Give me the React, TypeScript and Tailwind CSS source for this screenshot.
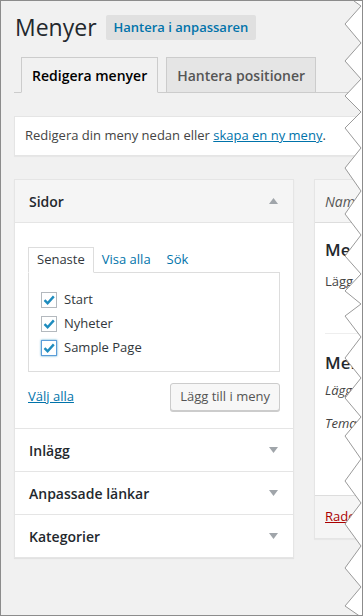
import React from 'react';

const leftPts = [23, 60, 95, 127, 167, 213, 255, 290, 315, 357, 397, 435, 480, 523, 567, 605];

// torn right edge of the screenshot
function TornEdge() {
  const pts: string[] = ['355,0'];
  let prev = 0;
  leftPts.forEach((y) => {
    const mid = Math.round((prev + y) / 2);
    pts.push(`362,${prev === 0 ? 5 : mid}`);
    pts.push(`346,${y}`);
    prev = y;
  });
  pts.push('362,616');
  const line = pts.join(' ');
  return (
    <svg className="absolute top-0 right-0 pointer-events-none" width="363" height="616" viewBox="0 0 363 616">
      <polygon points={`${line} 363,616 363,0`} fill="#ffffff" />
      <polyline points={line} fill="none" stroke="#9a9a9a" strokeWidth="1" />
    </svg>
  );
}

function Check({ focused }: { focused?: boolean }) {
  return (
    <span
      className={`w-4 h-4 bg-white border flex items-center justify-center ${
        focused ? 'border-[#5b9dd9] shadow-[0_0_2px_rgba(30,140,190,0.8)]' : 'border-[#b4b9be]'
      }`}
    >
      <svg width="14" height="14" viewBox="0 0 14 14">
        <path d="M2.5 7.2 L5.6 10.2 L11.8 3.4" fill="none" stroke="#1e8cbe" strokeWidth="2.4" />
      </svg>
    </span>
  );
}

function Arrow({ up }: { up?: boolean }) {
  return (
    <svg width="9" height="6" viewBox="0 0 9 6">
      <path d={up ? 'M0 6 L4.5 0 L9 6 Z' : 'M0 0 L4.5 6 L9 0 Z'} fill="#a0a5aa" />
    </svg>
  );
}

function Section({ title }: { title: string }) {
  return (
    <div className="h-[43px] border-t border-[#e5e5e5] flex items-center justify-between pl-[14px] pr-[15px]">
      <span className="text-[14px] font-semibold text-[#23282d]">{title}</span>
      <Arrow />
    </div>
  );
}

export default function App() {
  return (
    <div className="relative w-[363px] h-[616px] overflow-hidden bg-[#f1f1f1] border border-[#8c8c8c] font-['Open_Sans',sans-serif] text-[13px] text-[#444]">
      <div className="w-[520px] pl-[13px]">
        <div className="flex items-center gap-[9px] pt-[8px] h-[45px]">
          <h1 className="text-[23px] leading-[29px] text-[#23282d] pl-[1px]">Menyer</h1>
          <span className="bg-[#e0e0e0] rounded-[2px] px-[8px] h-[25px] flex items-center text-[13px] font-semibold text-[#0073aa]">
            Hantera i anpassaren
          </span>
        </div>

        <div className="flex items-end gap-[8px] border-b border-[#ccc] pl-[7px] mt-[11px] h-[36px]">
          <span className="h-[36px] -mb-px px-[10px] flex items-center border border-[#ccc] border-b-[#f1f1f1] bg-[#f1f1f1] text-[14px] font-semibold text-black">
            Redigera menyer
          </span>
          <span className="h-[35px] px-[10px] flex items-center border border-[#ccc] border-b-0 bg-[#e5e5e5] text-[14px] font-semibold text-[#555]">
            Hantera positioner
          </span>
        </div>

        <div className="mt-[23px] h-[40px] bg-white border border-[#e5e5e5] shadow-[0_1px_1px_rgba(0,0,0,0.04)] flex items-center pl-[10px]">
          Redigera din meny nedan eller&nbsp;
          <span className="text-[#0073aa] underline">skapa en ny meny</span>.
        </div>

        <div className="mt-[23px] flex gap-[20px] items-start">
          <div className="w-[280px] shrink-0 bg-white border border-[#e5e5e5] shadow-[0_1px_1px_rgba(0,0,0,0.06)]">
            <div className="h-[43px] bg-[#f5f5f5] border-b border-[#e5e5e5] flex items-center justify-between pl-[14px] pr-[15px]">
              <span className="text-[14px] font-semibold text-[#23282d]">Sidor</span>
              <Arrow up />
            </div>
            <div className="pt-[24px] px-[13px] pb-[17px]">
              <div className="flex items-end h-[25px]">
                <span className="h-[26px] -mb-px px-[8px] flex items-center border border-[#ddd] border-b-white bg-white text-[#32373c]">
                  Senaste
                </span>
                <span className="px-[8px] h-[25px] flex items-center text-[#0073aa]">Visa alla</span>
                <span className="px-[8px] h-[25px] flex items-center text-[#0073aa]">Sök</span>
              </div>
              <div className="border border-[#ddd] pt-[15px] pb-[11px] pl-[12px]">
                {['Start', 'Nyheter', 'Sample Page'].map((t, i) => (
                  <div key={t} className="h-[24px] flex items-center gap-[7px] text-[13px] text-[#32373c]">
                    <Check focused={i === 2} />
                    {t}
                  </div>
                ))}
              </div>
              <div className="mt-[11px] flex items-center justify-between">
                <span className="text-[#0073aa] underline">Välj alla</span>
                <span className="h-[28px] px-[9px] flex items-center bg-[#f7f7f7] border border-[#ccc] rounded-[3px] shadow-[0_1px_0_#ccc] text-[#555]">
                  Lägg till i meny
                </span>
              </div>
            </div>
            <Section title="Inlägg" />
            <Section title="Anpassade länkar" />
            <Section title="Kategorier" />
          </div>

          <div className="flex-1 bg-white border border-[#e5e5e5] shadow-[0_1px_1px_rgba(0,0,0,0.04)]">
            <div className="h-[43px] bg-[#f5f5f5] border-b border-[#ddd] flex items-center pl-[10px] italic text-[14px] text-[#555]">
              Namn på meny
            </div>
            <div className="px-[10px] pt-[15px]">
              <h3 className="text-[17px] font-semibold text-[#23282d] leading-[24px]">Menystruktur</h3>
              <p className="mt-[9px] leading-[20px]">Lägg till menyval</p>
              <div className="mt-[42px] border-t border-[#eee]" />
              <h3 className="mt-[17px] text-[17px] font-semibold text-[#23282d] leading-[24px]">Menyinställningar</h3>
              <p className="mt-[5px] italic leading-[20px]">Lägg till sidor</p>
              <p className="mt-[13px] italic leading-[20px]">Temaplatser</p>
              <div className="h-[62px]" />
            </div>
            <div className="h-[43px] bg-[#f5f5f5] border-t border-[#ddd] flex items-center pl-[10px]">
              <span className="text-[#a00] underline">Radera meny</span>
            </div>
          </div>
        </div>
      </div>
      <TornEdge />
    </div>
  );
}
